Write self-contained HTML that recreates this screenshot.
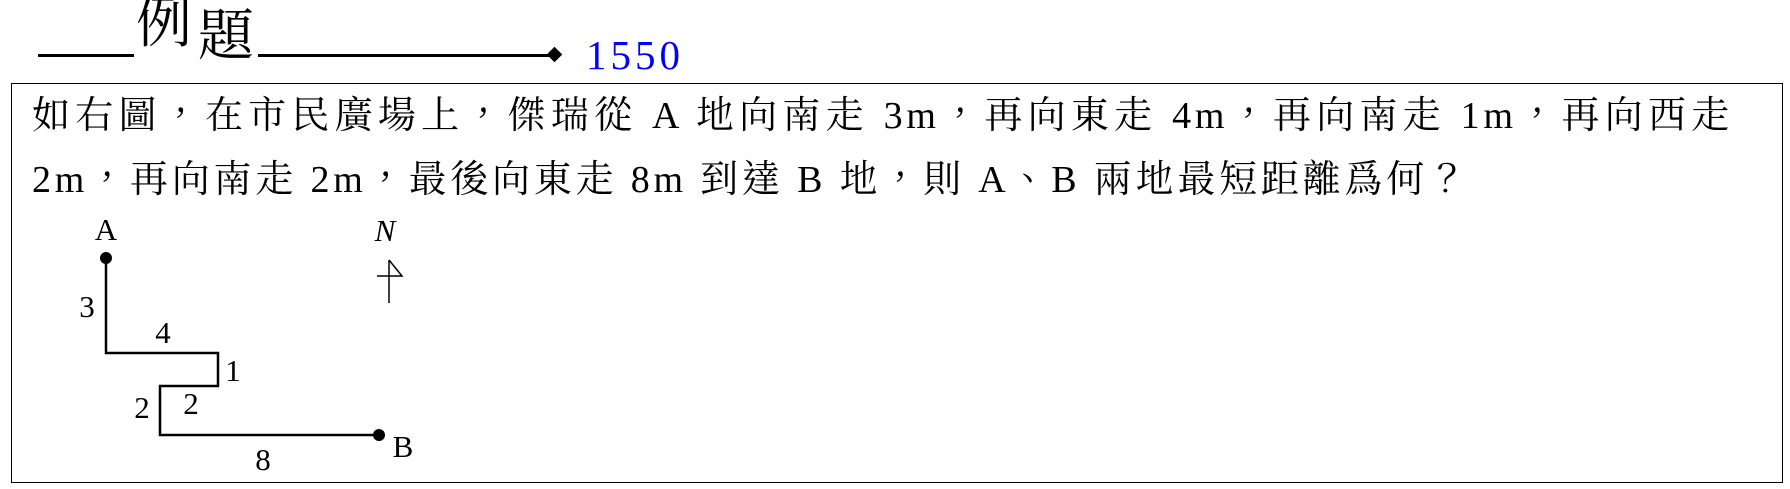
<!DOCTYPE html>
<html><head><meta charset="utf-8"><style>
body{margin:0;width:1790px;height:489px;background:#fff;position:relative;overflow:hidden}
.t{position:absolute;font-family:"Liberation Serif","Noto Serif CJK SC",serif;color:#000;white-space:nowrap}
.ln{position:absolute;left:32px;font-size:38px;letter-spacing:3.8px;font-family:"Liberation Serif","Noto Serif CJK TC","Noto Serif CJK SC",serif;white-space:nowrap;line-height:1}
</style></head><body>
<div style="position:absolute;left:38px;top:54px;width:512px;height:3px;background:#000"></div>
<div style="position:absolute;left:549px;top:49px;width:11px;height:11px;background:#000;transform:rotate(45deg)"></div>
<div style="position:absolute;left:134px;top:10px;width:124px;height:55px;background:#fff"></div>
<div class="t" style="left:136px;top:-4px;font-size:56px;line-height:1">例</div>
<div class="t" style="left:198px;top:9px;font-size:56px;line-height:1">題</div>
<div class="t" style="left:586px;top:35px;font-size:41px;letter-spacing:4px;color:#0000ff;line-height:1">1550</div>
<div style="position:absolute;left:11px;top:83px;width:1770px;height:398px;border:1.5px solid #000"></div>
<div class="ln" style="top:97px;width:1701px;white-space:normal;text-align:justify;text-align-last:justify">如右圖，在市民廣場上，傑瑞從 A 地向南走 3m，再向東走 4m，再向南走 1m，再向西走</div>
<div class="ln" style="top:161px">2m，再向南走 2m，最後向東走 8m 到達 B 地，則 A、B 兩地最短距離爲何？</div>
<svg style="position:absolute;left:0;top:0" width="1790" height="489">
<polyline points="106,258 106,353 218,353 218,386 160,386 160,435 379,435" fill="none" stroke="#000" stroke-width="2.5"/>
<circle cx="106" cy="258" r="6"/><circle cx="379" cy="435" r="6"/>
<g font-family="Liberation Serif,serif" font-size="31" text-anchor="middle">
<text x="106" y="240">A</text><text x="87" y="317">3</text><text x="163" y="343">4</text>
<text x="233" y="381">1</text><text x="142" y="418">2</text><text x="191" y="414">2</text>
<text x="263" y="470">8</text><text x="403" y="457">B</text>
<text x="385" y="241" font-style="italic">N</text></g>
<path d="M389,260 V303 M377,276 H402 L389,260" fill="none" stroke="#000" stroke-width="1.5"/>
</svg>
</body></html>
